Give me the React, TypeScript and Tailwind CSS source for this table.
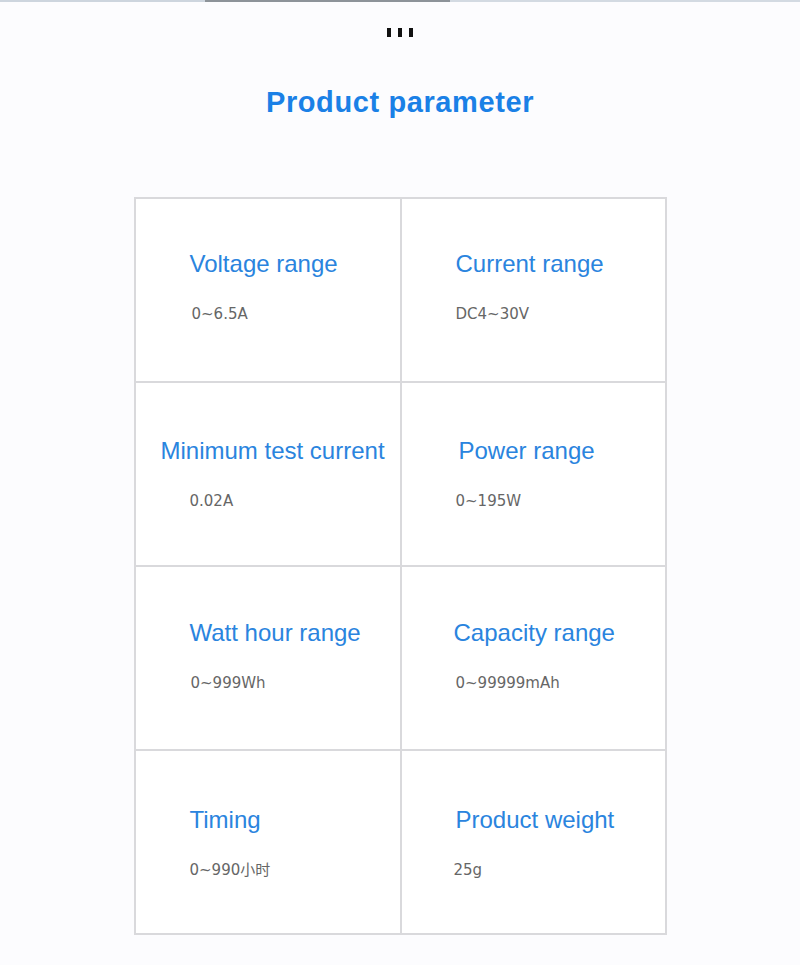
import React from "react";

type Param = {
  label: string;
  value: string;
  pt: string;
  labelPl: string;
  valuePl: string;
};

const PARAMS: Param[] = [
  { label: "Voltage range", value: "0~6.5A", pt: "pt-[51px]", labelPl: "pl-[54px]", valuePl: "pl-[56px]" },
  { label: "Current range", value: "DC4~30V", pt: "pt-[51px]", labelPl: "pl-[54px]", valuePl: "pl-[54px]" },
  { label: "Minimum test current", value: "0.02A", pt: "pt-[54px]", labelPl: "pl-[25px]", valuePl: "pl-[54px]" },
  { label: "Power range", value: "0~195W", pt: "pt-[54px]", labelPl: "pl-[57px]", valuePl: "pl-[54px]" },
  { label: "Watt hour range", value: "0~999Wh", pt: "pt-[52px]", labelPl: "pl-[54px]", valuePl: "pl-[55px]" },
  { label: "Capacity range", value: "0~99999mAh", pt: "pt-[52px]", labelPl: "pl-[52px]", valuePl: "pl-[54px]" },
  { label: "Timing", value: "0~990小时", pt: "pt-[55px]", labelPl: "pl-[54px]", valuePl: "pl-[54px]" },
  { label: "Product weight", value: "25g", pt: "pt-[55px]", labelPl: "pl-[54px]", valuePl: "pl-[52px]" },
];

function Cell({ p }: { p: Param }) {
  return (
    <div className={`h-[184px] border-r-2 border-b-2 border-[#d9d9dc] ${p.pt}`}>
      <p
        className={`${p.labelPl} text-[24px] leading-[28px] text-[#2a84de] whitespace-nowrap`}
        style={{ fontFamily: '"Liberation Sans", Arial, sans-serif' }}
      >
        {p.label}
      </p>
      <p
        className={`${p.valuePl} mt-[26px] text-[15px] leading-[20px] text-[#666666] whitespace-nowrap`}
        style={{ fontFamily: '"DejaVu Sans", "Noto Sans CJK SC", sans-serif' }}
      >
        {p.value}
      </p>
    </div>
  );
}

export default function App() {
  return (
    <div className="min-h-[965px] w-[800px] bg-[#fcfcfe]">
      {/* top edge strip */}
      <div className="flex h-[2px]">
        <div className="w-[205px] bg-[#cdd5de]" />
        <div className="w-[245px] bg-[#8d9399]" />
        <div className="flex-1 bg-[#d3dae2]" />
      </div>

      <div className="mt-[26px] flex justify-center gap-[7px]">
        <span className="h-[9px] w-[4px] bg-[#111]" />
        <span className="h-[9px] w-[4px] bg-[#111]" />
        <span className="h-[9px] w-[4px] bg-[#111]" />
      </div>

      <h1
        className="mt-[47px] text-center text-[29px] leading-[36px] font-bold tracking-[0.6px] text-[#1a80e6]"
        style={{ fontFamily: '"Liberation Sans", Arial, sans-serif' }}
      >
        Product parameter
      </h1>

      <div className="mx-auto mt-[77px] grid w-[533px] grid-cols-[266px_265px] border-t-2 border-l-2 border-[#d9d9dc] bg-white">
        {PARAMS.map((p) => (
          <Cell key={p.label} p={p} />
        ))}
      </div>
    </div>
  );
}
